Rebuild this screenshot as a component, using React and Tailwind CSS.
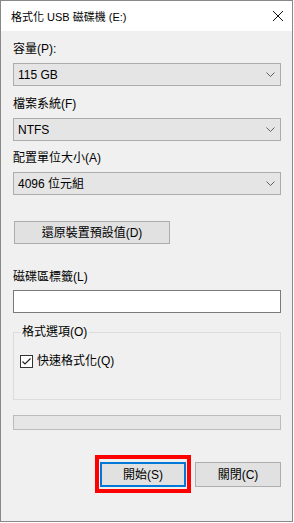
import React from "react";

// Small dropdown arrow used on the combo boxes
const Chevron = () => (
  <svg width="9" height="5" viewBox="0 0 9 5" className="shrink-0">
    <polyline points="0.5,0.5 4.5,4.5 8.5,0.5" fill="none" stroke="#606060" strokeWidth="1" />
  </svg>
);

const ComboBox = ({ value }) => (
  <div className="flex h-[23px] w-[268px] items-center justify-between border border-[#acacac] bg-[#e5e5e5] pl-[4px] pr-[5px]">
    <span>{value}</span>
    <Chevron />
  </div>
);

const Field = ({ label, value, className }) => (
  <div className={className}>
    <div className="h-[16px]">{label}</div>
    <div className="mt-[6px]">
      <ComboBox value={value} />
    </div>
  </div>
);

const App = () => {
  return (
    <div className="h-[523px] w-[294px] bg-white">
      <div className="flex h-[522px] w-[293px] flex-col border border-[#888888] font-['Liberation_Sans','Noto_Sans_CJK_TC',sans-serif] text-[12px] leading-[16px] text-black">
        {/* title bar */}
        <div className="flex h-[30px] items-center justify-between bg-white pl-[10px] pr-[9px]">
          <span className="pt-[1px] text-[11px]">格式化 USB 磁碟機 (E:)</span>
          <svg width="10" height="10" viewBox="0 0 10 10">
            <path d="M0,0 L10,10 M10,0 L0,10" stroke="#111" strokeWidth="1" />
          </svg>
        </div>

        {/* dialog body */}
        <div className="flex-1 bg-[#f0f0f0] pl-[12px]">
          <Field className="mt-[10px]" label="容量(P):" value="115 GB" />
          <Field className="mt-[10px]" label="檔案系統(F)" value="NTFS" />
          <Field className="mt-[9px]" label="配置單位大小(A)" value="4096 位元組" />

          <button className="ml-[1px] mt-[26px] h-[23px] w-[156px] border border-[#adadad] bg-[#e1e1e1]">
            還原裝置預設值(D)
          </button>

          <div className="mt-[25px] h-[16px]">磁碟區標籤(L)</div>
          <div className="mt-[5px] h-[23px] w-[268px] border border-[#7a7a7a] bg-white" />

          <fieldset className="mt-[11px] h-[76px] w-[268px] border border-[#dcdcdc] pl-[6px]">
            <legend className="px-[2px]">格式選項(O)</legend>
            <div className="mt-[13px] flex items-center gap-[4px]">
              <div className="flex h-[13px] w-[13px] items-center justify-center border border-[#333333] bg-white">
                <svg width="11" height="11" viewBox="0 0 11 11">
                  <polyline points="1.5,5.5 4,8 9.5,2.5" fill="none" stroke="#222" strokeWidth="1.2" />
                </svg>
              </div>
              <span>快速格式化(Q)</span>
            </div>
          </fieldset>

          <div className="mt-[15px] h-[15px] w-[268px] border border-[#bcbcbc] bg-[#e6e6e6]" />

          <div className="mt-[32px] flex w-[268px] justify-end gap-[9px]">
            <div className="relative">
              <button className="h-[25px] w-[86px] border-2 border-[#0078d7] bg-[#e1e1e1]">開始(S)</button>
              <div className="pointer-events-none absolute left-[-5px] top-[-7px] h-[38px] w-[96px] border-4 border-[#ff0000]" />
            </div>
            <button className="h-[25px] w-[86px] border border-[#adadad] bg-[#e1e1e1]">關閉(C)</button>
          </div>
        </div>
      </div>
    </div>
  );
};

export default App;
